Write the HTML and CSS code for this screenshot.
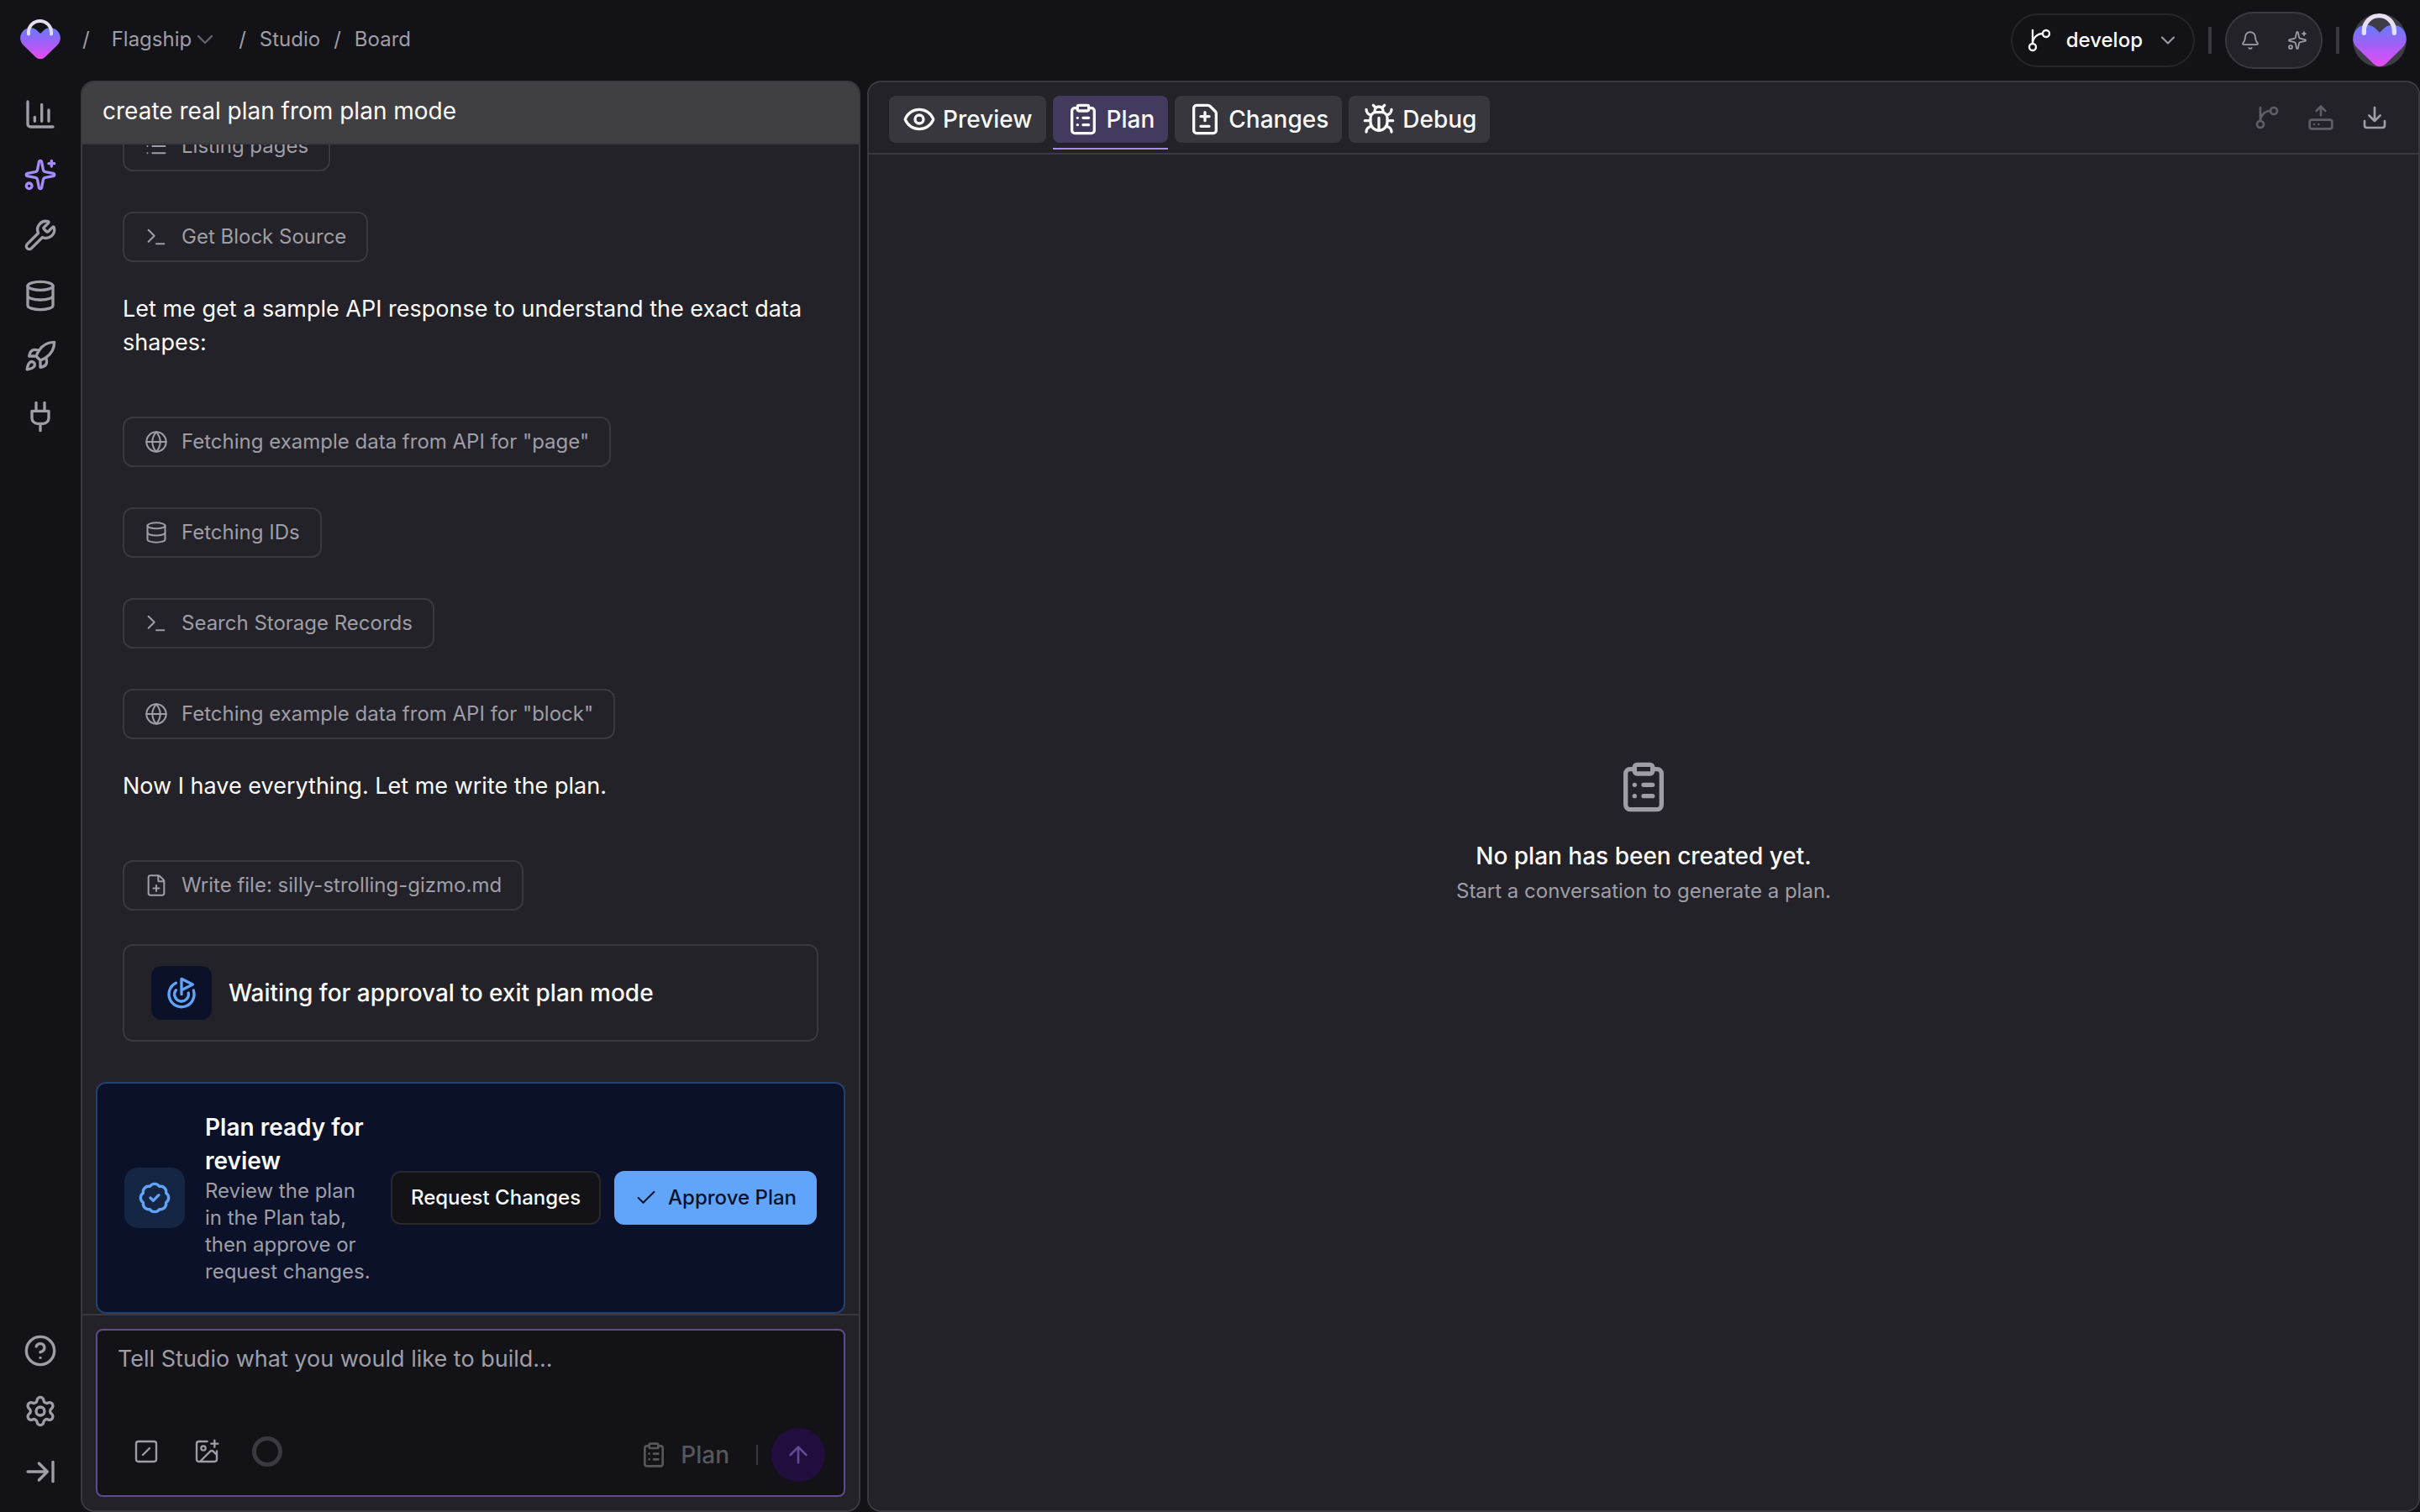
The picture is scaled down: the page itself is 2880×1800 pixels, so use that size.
FILE: index.html
```html
<!DOCTYPE html>
<html lang="en">
<head>
    <meta charset="UTF-8">
    <meta name="viewport" content="width=device-width, initial-scale=1.0">
    <title>Studio Board</title>
    <link rel="stylesheet" href="styles.css">
</head>
<body>
    <!-- Icon sprite -->
    <svg class="sprite" aria-hidden="true">
        <defs>
            <linearGradient id="heartFill" x1="0" y1="0" x2="0" y2="1">
                <stop offset="0" stop-color="#667cfb"/>
                <stop offset="0.5" stop-color="#a35ff6"/>
                <stop offset="1" stop-color="#ea4bf5"/>
            </linearGradient>
        </defs>
        <symbol id="logo" viewBox="0 0 48 48">
            <path d="M24 17 19.5 12.8C14.5 8.5 7 9.5 3 14.5C-1 19.5-1 26 4 31L18.500 45C21.500 48 26.500 48 29.500 45L44 31C49 26 49 19.500 45 14.500C41 9.500 33.500 8.500 28.500 12.800Z" fill="url(#heartFill)" stroke="none"/>
            <path d="M10 17.500v-2a13.500 13.500 0 0 1 27 0v2" fill="none" stroke="#e6dff2" stroke-width="4"/>
        </symbol>
        <symbol id="chart" viewBox="0 0 24 24"><path d="M3 3v16a2 2 0 0 0 2 2h16M18 17V9M13 17V5M8 17v-3"/></symbol>
        <symbol id="sparkles" viewBox="0 0 24 24"><path d="M11.017 2.814a1 1 0 0 1 1.966 0l1.051 5.558a2 2 0 0 0 1.594 1.594l5.558 1.051a1 1 0 0 1 0 1.966l-5.558 1.051a2 2 0 0 0-1.594 1.594l-1.051 5.558a1 1 0 0 1-1.966 0l-1.051-5.558a2 2 0 0 0-1.594-1.594l-5.558-1.051a1 1 0 0 1 0-1.966l5.558-1.051a2 2 0 0 0 1.594-1.594zM20 2v4M22 4h-4"/><circle cx="4" cy="20" r="2"/></symbol>
        <symbol id="wrench" viewBox="0 0 24 24"><path d="M14.7 6.3a1 1 0 0 0 0 1.4l1.6 1.6a1 1 0 0 0 1.4 0l3.106-3.105c.32-.322.863-.22.983.218a6 6 0 0 1-8.259 7.057l-7.91 7.91a1 1 0 0 1-2.999-3l7.91-7.91a6 6 0 0 1 7.057-8.259c.438.12.54.662.219.984z"/></symbol>
        <symbol id="database" viewBox="0 0 24 24"><ellipse cx="12" cy="5" rx="9" ry="3"/><path d="M3 5v14a9 3 0 0 0 18 0V5M3 12a9 3 0 0 0 18 0"/></symbol>
        <symbol id="rocket" viewBox="0 0 24 24"><path d="M4.500 16.500c-1.500 1.260-2 5-2 5s3.740-.5 5-2c.710-.840.700-2.130-.090-2.910a2.180 2.180 0 0 0-2.910-.090zM12 15l-3-3a22 22 0 0 1 2-3.950A12.880 12.880 0 0 1 22 2c0 2.720-.780 7.500-6 11a22.350 22.350 0 0 1-4 2zM9 12H4s.550-3.030 2-4c1.620-1.080 5 0 5 0M12 15v5s3.030-.550 4-2c1.080-1.620 0-5 0-5"/></symbol>
        <symbol id="plug" viewBox="0 0 24 24"><path d="M12 22v-5M9 8V2M15 8V2M18 8v5a4 4 0 0 1-4 4h-4a4 4 0 0 1-4-4V8Z"/></symbol>
        <symbol id="help" viewBox="0 0 24 24"><circle cx="12" cy="12" r="10"/><path d="M9.090 9a3 3 0 0 1 5.830 1c0 2-3 3-3 3M12 17h.01"/></symbol>
        <symbol id="settings" viewBox="0 0 24 24"><path d="M9.671 4.136a2.340 2.340 0 0 1 4.659 0 2.340 2.340 0 0 0 3.319 1.915 2.340 2.340 0 0 1 2.330 4.033 2.340 2.340 0 0 0 0 3.831 2.340 2.340 0 0 1-2.330 4.033 2.340 2.340 0 0 0-3.319 1.915 2.340 2.340 0 0 1-4.659 0 2.340 2.340 0 0 0-3.320-1.915 2.340 2.340 0 0 1-2.330-4.033 2.340 2.340 0 0 0 0-3.831A2.340 2.340 0 0 1 6.350 6.051a2.340 2.340 0 0 0 3.319-1.915"/><circle cx="12" cy="12" r="3"/></symbol>
        <symbol id="expand" viewBox="0 0 24 24"><path d="M17 12H3M11 18l6-6-6-6M21 5v14"/></symbol>
        <symbol id="chevron" viewBox="0 0 24 24"><path d="m6 9 6 6 6-6"/></symbol>
        <symbol id="branch" viewBox="0 0 24 24"><path d="M15 6a9 9 0 0 0-9 9V3"/><circle cx="18" cy="6" r="3"/><circle cx="6" cy="18" r="3"/></symbol>
        <symbol id="bell" viewBox="0 0 24 24"><path d="M10.268 21a2 2 0 0 0 3.464 0M3.262 15.326A1 1 0 0 0 4 17h16a1 1 0 0 0 .740-1.673C19.410 13.956 18 12.499 18 8A6 6 0 0 0 6 8c0 4.499-1.411 5.956-2.738 7.326"/></symbol>
        <symbol id="list" viewBox="0 0 24 24"><path d="M3 5h.01M3 12h.01M3 19h.01M8 5h13M8 12h13M8 19h13"/></symbol>
        <symbol id="terminal" viewBox="0 0 24 24"><path d="M12 19h8M4 17l6-6-6-6"/></symbol>
        <symbol id="globe" viewBox="0 0 24 24"><circle cx="12" cy="12" r="10"/><path d="M12 2a14.500 14.500 0 0 0 0 20 14.500 14.500 0 0 0 0-20M2 12h20"/></symbol>
        <symbol id="file-plus" viewBox="0 0 24 24"><path d="M6 22a2 2 0 0 1-2-2V4a2 2 0 0 1 2-2h8a2.400 2.400 0 0 1 1.704.706l3.588 3.588A2.400 2.400 0 0 1 20 8v12a2 2 0 0 1-2 2zM14 2v5a1 1 0 0 0 1 1h5M9 15h6M12 18v-6"/></symbol>
        <symbol id="file-diff" viewBox="0 0 24 24"><path d="M6 22a2 2 0 0 1-2-2V4a2 2 0 0 1 2-2h8a2.400 2.400 0 0 1 1.704.706l3.588 3.588A2.400 2.400 0 0 1 20 8v12a2 2 0 0 1-2 2zM9 10h6M12 13V7M9 17h6"/></symbol>
        <symbol id="goal" viewBox="0 0 24 24"><path d="M12 13V2l8 4-8 4M20.561 10.222a9 9 0 1 1-12.550-5.290M8.002 9.997a5 5 0 1 0 8.900 2.020"/></symbol>
        <symbol id="badge-check" viewBox="0 0 24 24"><path d="M3.850 8.620a4 4 0 0 1 4.780-4.770 4 4 0 0 1 6.740 0 4 4 0 0 1 4.780 4.780 4 4 0 0 1 0 6.740 4 4 0 0 1-4.770 4.780 4 4 0 0 1-6.750 0 4 4 0 0 1-4.780-4.770 4 4 0 0 1 0-6.760ZM9 12l2 2 4-4"/></symbol>
        <symbol id="check" viewBox="0 0 24 24"><path d="M20 6 9 17l-5-5"/></symbol>
        <symbol id="slash" viewBox="0 0 24 24"><rect x="3" y="3" width="18" height="18" rx="2"/><path d="m9 15 6-6"/></symbol>
        <symbol id="image-plus" viewBox="0 0 24 24"><path d="M16 5h6M19 2v6M21 11.500V19a2 2 0 0 1-2 2H5a2 2 0 0 1-2-2V5a2 2 0 0 1 2-2h7.500M21 15l-3.086-3.086a2 2 0 0 0-2.828 0L6 21"/><circle cx="9" cy="9" r="2"/></symbol>
        <symbol id="clipboard" viewBox="0 0 24 24"><rect x="8" y="2" width="8" height="4" rx="1"/><path d="M16 4h2a2 2 0 0 1 2 2v14a2 2 0 0 1-2 2H6a2 2 0 0 1-2-2V6a2 2 0 0 1 2-2h2M12 11h4M12 16h4M8 11h.01M8 16h.01"/></symbol>
        <symbol id="arrow-up" viewBox="0 0 24 24"><path d="m5 12 7-7 7 7M12 19V5"/></symbol>
        <symbol id="eye" viewBox="0 0 24 24"><path d="M2.062 12.348a1 1 0 0 1 0-.696 10.750 10.750 0 0 1 19.876 0 1 1 0 0 1 0 .696 10.750 10.750 0 0 1-19.876 0"/><circle cx="12" cy="12" r="3"/></symbol>
        <symbol id="bug" viewBox="0 0 24 24"><path d="M12 20v-9M14 7a4 4 0 0 1 4 4v3a6 6 0 0 1-12 0v-3a4 4 0 0 1 4-4zM14.120 3.880 16 2M21 21a4 4 0 0 0-3.810-4M21 5a4 4 0 0 1-3.550 3.970M22 13h-4M3 21a4 4 0 0 1 3.810-4M3 5a4 4 0 0 0 3.550 3.970M6 13H2M8 2l1.880 1.880M9 7.130V6a3 3 0 1 1 6 0v1.130"/></symbol>
        <symbol id="drive-upload" viewBox="0 0 24 24"><path d="m16 6-4-4-4 4M12 2v8M6 18h.01M10 18h.01"/><rect x="2" y="14" width="20" height="8" rx="2"/></symbol>
        <symbol id="download" viewBox="0 0 24 24"><path d="M12 15V3M21 15v4a2 2 0 0 1-2 2H5a2 2 0 0 1-2-2v-4M7 10l5 5 5-5"/></symbol>
    </svg>

    <div class="app">
        <header class="topbar">
            <nav class="breadcrumb" aria-label="Breadcrumb">
                <a href="#" class="logo" aria-label="Home"><svg class="icon-48"><use href="#logo"/></svg></a>
                <span class="slash">/</span>
                <button class="crumb-button">Flagship <svg class="icon-32 thin dim"><use href="#chevron"/></svg></button>
                <span>/</span>
                <a href="#">Studio</a>
                <span>/</span>
                <a href="#">Board</a>
            </nav>
            <div class="topbar-actions">
                <button class="branch-button">
                    <svg class="icon-32 thin"><use href="#branch"/></svg>
                    develop
                    <svg class="icon-28 thin muted"><use href="#chevron"/></svg>
                </button>
                <span class="divider"></span>
                <div class="quick-actions">
                    <button aria-label="Notifications"><svg class="icon-24 thin"><use href="#bell"/></svg></button>
                    <button aria-label="Assistant"><svg class="icon-24 thin"><use href="#sparkles"/></svg></button>
                </div>
                <span class="divider"></span>
                <button class="avatar" aria-label="Account"><svg class="icon-64"><use href="#logo"/></svg></button>
            </div>
        </header>

        <aside class="sidebar">
            <nav class="side-nav" aria-label="Main">
                <a href="#" aria-label="Analytics"><svg class="icon-40"><use href="#chart"/></svg></a>
                <a href="#" class="active" aria-label="Studio"><svg class="icon-40"><use href="#sparkles"/></svg></a>
                <a href="#" aria-label="Tools"><svg class="icon-40"><use href="#wrench"/></svg></a>
                <a href="#" aria-label="Storage"><svg class="icon-40"><use href="#database"/></svg></a>
                <a href="#" aria-label="Deployments"><svg class="icon-40"><use href="#rocket"/></svg></a>
                <a href="#" aria-label="Plugins"><svg class="icon-40"><use href="#plug"/></svg></a>
            </nav>
            <nav class="side-nav" aria-label="Support">
                <a href="#" aria-label="Help"><svg class="icon-40"><use href="#help"/></svg></a>
                <a href="#" aria-label="Settings"><svg class="icon-40"><use href="#settings"/></svg></a>
                <button aria-label="Expand sidebar"><svg class="icon-40"><use href="#expand"/></svg></button>
            </nav>
        </aside>

        <main class="panels">
            <section class="panel chat">
                <h1 class="chat-title">create real plan from plan mode</h1>

                <div class="chat-scroll">
                    <div class="messages">
                        <div class="chip"><svg class="icon-28 thin"><use href="#list"/></svg>Listing pages</div>
                        <div class="chip"><svg class="icon-28 thin"><use href="#terminal"/></svg>Get Block Source</div>
                        <p class="message">Let me get a sample API response to understand the exact data shapes:</p>
                        <div class="chip"><svg class="icon-28 thin"><use href="#globe"/></svg>Fetching example data from API for "page"</div>
                        <div class="chip"><svg class="icon-28 thin"><use href="#database"/></svg>Fetching IDs</div>
                        <div class="chip"><svg class="icon-28 thin"><use href="#terminal"/></svg>Search Storage Records</div>
                        <div class="chip"><svg class="icon-28 thin"><use href="#globe"/></svg>Fetching example data from API for "block"</div>
                        <p class="message">Now I have everything. Let me write the plan.</p>
                        <div class="chip"><svg class="icon-28 thin"><use href="#file-plus"/></svg>Write file: silly-strolling-gizmo.md</div>
                        <div class="waiting">
                            <span class="waiting-icon"><svg class="icon-40"><use href="#goal"/></svg></span>
                            Waiting for approval to exit plan mode
                        </div>
                    </div>

                    <div class="review">
                        <span class="review-icon"><svg class="icon-40"><use href="#badge-check"/></svg></span>
                        <div class="review-text">
                            <h2>Plan ready for review</h2>
                            <p>Review the plan in the Plan tab, then approve or request changes.</p>
                        </div>
                        <div class="review-actions">
                            <button class="btn">Request Changes</button>
                            <button class="btn btn-primary"><svg class="icon-28 thin"><use href="#check"/></svg>Approve Plan</button>
                        </div>
                    </div>
                </div>

                <form class="composer">
                    <div class="composer-box">
                        <textarea aria-label="Message" placeholder="Tell Studio what you would like to build..."></textarea>
                        <div class="composer-bar">
                            <div class="composer-tools">
                                <button type="button" aria-label="Commands"><svg class="icon-32 thin"><use href="#slash"/></svg></button>
                                <button type="button" aria-label="Add image"><svg class="icon-32 thin"><use href="#image-plus"/></svg></button>
                                <button type="button" aria-label="Context usage"><span class="ring"></span></button>
                            </div>
                            <div class="composer-send">
                                <button type="button" class="mode"><svg class="icon-32"><use href="#clipboard"/></svg>Plan</button>
                                <span class="line"></span>
                                <button type="submit" class="send" aria-label="Send"><svg class="icon-32"><use href="#arrow-up"/></svg></button>
                            </div>
                        </div>
                    </div>
                </form>
            </section>

            <section class="panel preview">
                <div class="toolbar">
                    <div class="tabs" role="tablist">
                        <button class="tab" role="tab"><svg class="icon-40"><use href="#eye"/></svg>Preview</button>
                        <button class="tab selected" role="tab" aria-selected="true"><svg class="icon-40"><use href="#clipboard"/></svg>Plan</button>
                        <button class="tab" role="tab"><svg class="icon-40"><use href="#file-diff"/></svg>Changes</button>
                        <button class="tab" role="tab"><svg class="icon-40"><use href="#bug"/></svg>Debug</button>
                    </div>
                    <div class="tools">
                        <button class="off" aria-label="Branch"><svg class="icon-32"><use href="#branch"/></svg></button>
                        <button class="off" aria-label="Deploy"><svg class="icon-32"><use href="#drive-upload"/></svg></button>
                        <button aria-label="Download"><svg class="icon-32"><use href="#download"/></svg></button>
                    </div>
                </div>
                <div class="empty">
                    <svg class="icon-64"><use href="#clipboard"/></svg>
                    <h2>No plan has been created yet.</h2>
                    <p>Start a conversation to generate a plan.</p>
                </div>
            </section>
        </main>
    </div>
</body>
</html>
```
FILE: styles.css
```css
:root {
    --bg: #131217;
    --panel: #232228;
    --border: #3a3940;
    --muted: #9f9ea7;
    --text: #fafafa;
    --blue: #60a5fa;
    --purple: #a78bfa;
}

* {
    box-sizing: border-box;
}

body {
    margin: 0;
    background-color: var(--bg);
    color: var(--text);
    font-family: Inter, "Liberation Sans", sans-serif;
    font-size: 28px;
    line-height: 40px;
}

h1, h2, p {
    margin: 0;
    font-size: 28px;
    font-weight: 400;
}

a {
    color: inherit;
    text-decoration: none;
}

button {
    display: flex;
    align-items: center;
    justify-content: center;
    padding: 0;
    border: none;
    background: none;
    color: inherit;
    font: inherit;
    cursor: pointer;
}

svg {
    display: block;
    flex: none;
    fill: none;
    stroke: currentColor;
    stroke-width: 2;
    stroke-linecap: round;
    stroke-linejoin: round;
}

.sprite {
    position: absolute;
    width: 0;
    height: 0;
}

.thin {
    stroke-width: 1.75;
}

.muted {
    color: var(--muted);
}

.dim {
    color: #66656d;
}

.icon-24 { width: 24px; height: 24px; }
.icon-28 { width: 28px; height: 28px; }
.icon-32 { width: 32px; height: 32px; }
.icon-40 { width: 40px; height: 40px; }
.icon-48 { width: 48px; height: 48px; }
.icon-64 { width: 64px; height: 64px; }

.app {
    display: grid;
    grid-template-columns: 96px minmax(0, 1fr);
    grid-template-rows: 96px minmax(0, 1fr);
    height: 100vh;
}

/* Top bar */
.topbar {
    grid-column: 1 / -1;
    display: flex;
    align-items: center;
    justify-content: space-between;
    padding: 0 16px 0 24px;
    font-size: 24px;
    line-height: 32px;
}

.breadcrumb {
    display: flex;
    align-items: center;
    gap: 16px;
    padding-bottom: 2px;
    color: var(--muted);
}

.logo,
.slash {
    margin-right: 10px;
}

.crumb-button {
    margin-right: 8px;
}

.topbar-actions {
    display: flex;
    align-items: center;
    gap: 16px;
}

.branch-button {
    gap: 16px;
    height: 64px;
    padding: 0 16px;
    border: 2px solid #26252a;
    border-radius: 32px;
    font-weight: 500;
}

.divider {
    width: 4px;
    height: 32px;
    background-color: var(--border);
}

.quick-actions {
    display: flex;
    height: 68px;
    border: 2px solid var(--border);
    border-radius: 34px;
    background-color: var(--panel);
    color: var(--muted);
}

.quick-actions button {
    width: 56px;
}

.avatar {
    overflow: hidden;
    border-radius: 50%;
    background-color: #3e3d45;
}

/* Sidebar */
.sidebar {
    display: flex;
    flex-direction: column;
    justify-content: space-between;
    padding: 4px 0 12px;
    color: var(--muted);
}

.side-nav a,
.side-nav button {
    display: flex;
    align-items: center;
    justify-content: center;
    width: 100%;
    height: 72px;
}

.side-nav .active {
    color: var(--purple);
}

/* Panels */
.panels {
    display: grid;
    grid-template-columns: calc(100% / 3) minmax(0, 1fr);
    gap: 8px;
    min-height: 0;
}

.panel {
    display: flex;
    flex-direction: column;
    min-height: 0;
    overflow: hidden;
    border: 2px solid var(--border);
    border-radius: 16px;
    background-color: var(--panel);
}

.chat-title {
    padding: 14px 24px 18px;
    border-bottom: 2px solid var(--border);
    background-color: #403f43;
}

.chat-scroll {
    display: flex;
    flex: 1;
    flex-direction: column;
    justify-content: flex-end;
    min-height: 0;
    overflow: hidden;
}

.messages {
    display: flex;
    flex-direction: column;
    align-items: flex-start;
    padding: 0 48px 48px;
}

.chip {
    display: flex;
    align-items: center;
    gap: 16px;
    height: 60px;
    margin-bottom: 48px;
    padding: 0 24px;
    border: 2px solid var(--border);
    border-radius: 12px;
    color: var(--muted);
    font-size: 24px;
    line-height: 32px;
}

.message {
    margin: -12px 0 68px;
    font-size: 27px;
}

.waiting {
    display: flex;
    align-items: center;
    gap: 20px;
    width: 100%;
    margin-top: -8px;
    padding: 24px 32px;
    border: 2px solid var(--border);
    border-radius: 12px;
    font-weight: 500;
}

.waiting-icon {
    display: flex;
    align-items: center;
    justify-content: center;
    width: 72px;
    height: 64px;
    border-radius: 12px;
    background-color: #0b1128;
    color: var(--blue);
}

.review {
    display: flex;
    align-items: center;
    gap: 24px;
    margin: 0 16px;
    padding: 32px;
    border: 2px solid #23416b;
    border-radius: 12px;
    background-color: #0b1128;
}

.review-icon {
    display: flex;
    flex: none;
    align-items: center;
    justify-content: center;
    width: 72px;
    height: 72px;
    border-radius: 16px;
    background-color: #152544;
    color: var(--blue);
}

.review-text {
    flex: 1;
}

.review-text h2 {
    font-weight: 600;
}

.review-text p {
    color: var(--muted);
    font-size: 24px;
    line-height: 32px;
}

.review-actions {
    display: flex;
    gap: 16px;
}

.btn {
    gap: 12px;
    height: 64px;
    padding: 0 22px;
    border: 2px solid #29282b;
    border-radius: 12px;
    background-color: var(--bg);
    font-size: 24px;
    font-weight: 500;
    white-space: nowrap;
}

.btn-primary {
    border-color: var(--blue);
    background-color: var(--blue);
    color: #0b1128;
}

/* Composer */
.composer {
    padding: 16px;
    border-top: 2px solid var(--border);
}

.composer-box {
    border: 2px solid #604c90;
    border-radius: 8px;
    background-color: var(--bg);
}

.composer-box textarea {
    display: block;
    width: 100%;
    height: 112px;
    padding: 14px 24px;
    border: none;
    outline: none;
    background: none;
    color: var(--text);
    font: inherit;
    font-size: 27px;
    resize: none;
}

.composer-box textarea::placeholder {
    color: var(--muted);
    opacity: 1;
}

.composer-bar {
    display: flex;
    justify-content: space-between;
    height: 84px;
    padding: 0 22px 16px 26px;
}

.composer-tools {
    display: flex;
    align-items: flex-start;
    gap: 8px;
    color: var(--muted);
}

.composer-tools button {
    width: 64px;
    height: 64px;
}

.ring {
    width: 36px;
    height: 36px;
    border: 5px solid var(--border);
    border-radius: 50%;
}

.composer-send {
    display: flex;
    align-items: center;
    align-self: flex-end;
    gap: 16px;
}

.mode {
    gap: 16px;
    margin-right: 16px;
    color: #57565b;
    font-weight: 500;
}

.line {
    width: 2px;
    height: 24px;
    background-color: var(--border);
}

.send {
    width: 64px;
    height: 64px;
    border-radius: 50%;
    background-color: #210e3f;
    color: #604a91;
}

/* Preview panel */
.toolbar {
    display: flex;
    align-items: flex-start;
    justify-content: space-between;
    height: 86px;
    padding: 16px 20px 0 24px;
    border-bottom: 2px solid var(--border);
}

.tabs {
    display: flex;
    gap: 8px;
}

.tab {
    position: relative;
    gap: 8px;
    height: 56px;
    padding: 0 16px;
    border-radius: 8px;
    background-color: #38373d;
    font-weight: 500;
}

.tab.selected {
    background-color: #443a5e;
}

.tab.selected::after {
    content: "";
    position: absolute;
    left: 0;
    right: 0;
    bottom: -8px;
    height: 2px;
    background-color: var(--purple);
}

.tools {
    display: flex;
    color: var(--muted);
}

.tools button {
    width: 64px;
    height: 52px;
}

.tools .off {
    color: #5f5e66;
}

.empty {
    display: flex;
    flex: 1;
    flex-direction: column;
    align-items: center;
    justify-content: center;
    color: var(--muted);
}

.empty h2 {
    margin: 32px 0 8px;
    color: var(--text);
    font-weight: 500;
    line-height: 36px;
}

.empty p {
    font-size: 24px;
    line-height: 32px;
}
```
